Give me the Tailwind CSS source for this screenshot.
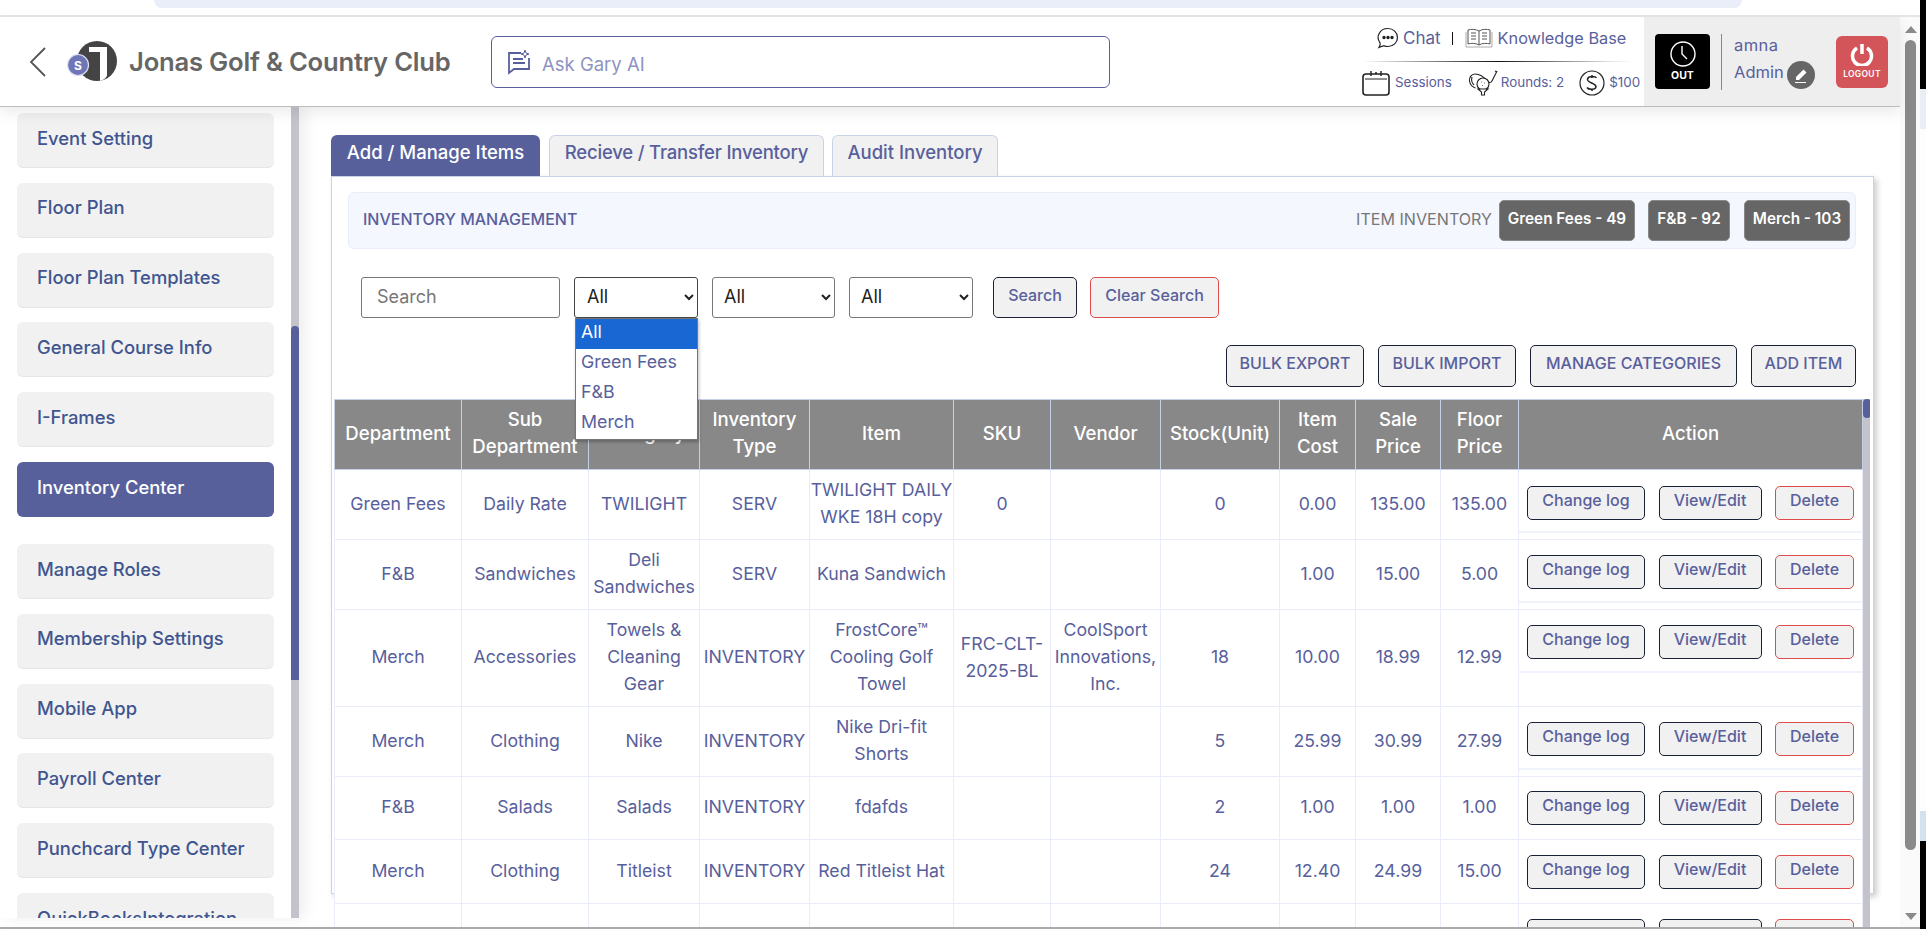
<!DOCTYPE html>
<html lang="en">
<head>
<meta charset="utf-8">
<title>Inventory Center</title>
<script src="https://cdn.jsdelivr.net/npm/@tailwindcss/browser@4"></script>
</head>
<body class="m-0 overflow-hidden bg-white">
<div class="flex h-[929px] w-[1926px] overflow-hidden font-['Inter',sans-serif] text-[#58609c]">
  <div class="flex w-[1920px] flex-col">
    <div class="flex h-[15px] shrink-0 bg-white pl-[154px]">
      <div class="h-[8px] w-[1588px] rounded-b-[12px] bg-[#e9eef8]"></div>
    </div>
    <div class="h-[2px] shrink-0 bg-[#e5e5e5]"></div>
    <div class="flex h-[910px] shrink-0">
      <div class="flex w-[1900px] flex-col">
        <header class="relative z-20 flex h-[90px] shrink-0 items-stretch border-b border-[#bcbcbc] bg-white shadow-[0_6px_14px_rgba(0,0,0,0.08)]">
          <svg class="ml-[29px] mt-[30px] h-[30px] w-[17px]" viewBox="0 0 17 30" fill="none" stroke="#555" stroke-width="1.8"><path d="M16 1 2 15l14 14"/></svg>
          <svg class="ml-[21px] mt-[23px] h-[42px] w-[50px]" viewBox="0 0 50 42">
            <circle cx="30" cy="21" r="20" fill="#444"/>
            <path d="M22 7h18v28c0 2-3 5-7 6V12H22z" fill="#fff"/>
            <circle cx="11" cy="25" r="10.5" fill="#6e76b8" stroke="#dfe1f2" stroke-width="1.2"/>
            <text x="11" y="29.5" text-anchor="middle" font-size="12" font-weight="700" fill="#fff" font-family="Inter">S</text>
          </svg>
          <div class="ml-[12px] mt-[29px] w-[321px] whitespace-nowrap text-[25.6px] font-semibold leading-[32px] tracking-[-0.2px] text-[#666]">Jonas Golf &amp; Country Club</div>
          <div class="ml-[41px] mt-[19px] flex h-[52px] w-[619px] items-center rounded-[6px] border border-[#58609c] pl-[15px]">
            <svg class="h-[26px] w-[24px]" viewBox="0 0 24 26" fill="none" stroke="#58609c" stroke-width="1.8"><path d="M14 4H2v20l5-4h15V9"/><path d="M6 10h10M6 14h12" /><path d="M18 1l1 3 3 1-3 1-1 3-1-3-3-1 3-1z" stroke-width="1"/></svg>
            <span class="ml-[11px] pt-[5px] text-[18.5px] text-[#8e93c0]">Ask Gary AI</span>
          </div>
          <div class="ml-[249px] flex w-[282px] flex-col pl-[3px]">
            <div class="flex h-[44px] items-center pb-[2px] pl-[15px]">
              <svg class="h-[22px] w-[22px]" viewBox="0 0 22 22" fill="none" stroke="#222" stroke-width="1.2"><path d="M11 1.5a9.5 9 0 0 1 0 18c-2 0-3-.2-4-.8l-5 1.6c1-1.500 1.500-3 1-4.500A9.500 9 0 0 1 11 1.500z"/><circle cx="7" cy="10.500" r="1.100" fill="#222"/><circle cx="11" cy="10.500" r="1.100" fill="#222"/><circle cx="15" cy="10.500" r="1.100" fill="#222"/></svg>
              <span class="ml-[4px] text-[17px] leading-[20px]">Chat</span>
              <span class="ml-[11px] h-[13px] w-px bg-[#111]"></span>
              <svg class="ml-[12px] h-[22px] w-[28px]" viewBox="0 0 28 22" fill="none" stroke="#555" stroke-width="1"><path d="M14 4C11 2 6 2 3 3v14c3-1 8-1 11 1 3-2 8-2 11-1V3c-3-1-8-1-11 1zM14 4v14"/><path d="M1 5v15h26V5" stroke="#aaa"/><path d="M6 6h5M6 9h5M6 12h5M17 6h5M17 9h5M17 12h5"/></svg>
              <span class="ml-[5px] whitespace-nowrap text-[16.3px] leading-[20px]">Knowledge Base</span>
            </div>
            <div class="h-px w-[272px] bg-[linear-gradient(90deg,#fff,#111_50%,#ddd_90%,#fff)]"></div>
            <div class="flex h-[44px] items-center pb-[3px] text-[13.4px]">
              <svg class="h-[26px] w-[28px]" viewBox="0 0 28 26" fill="none" stroke="#222" stroke-width="1.600"><rect x="1" y="4" width="26" height="21" rx="3"/><path d="M3 9h22" stroke-width="1"/><path d="M9 1v5M19 1v5M13 3h2" stroke-width="1.400"/></svg>
              <span class="ml-[5px] whitespace-nowrap">Sessions</span>
              <svg class="ml-[16px] h-[26px] w-[30px]" viewBox="0 0 30 26" fill="none" stroke="#222" stroke-width="1.100"><path d="M29 1 24 11c-1 2-3 2-5 0-3-4-7-7-12-7C3 4 1 8 1.500 11c.5 3 3 6 6 7"/><path d="M4 7c-1 3 0 6 2 8"/><path d="M27 1l2 1"/><circle cx="15" cy="14" r="6" fill="#fff"/><path d="M10 19h10l-3.500 3v3h-3v-3z" fill="#fff"/><path d="M13 12h.6M16 13h.6M14 15.500h.6"/></svg>
              <span class="ml-[3px] whitespace-nowrap">Rounds: 2</span>
              <svg class="ml-[15px] h-[26px] w-[26px]" viewBox="0 0 26 26" fill="none" stroke="#222" stroke-width="1.200"><circle cx="13" cy="13" r="12"/><path d="M17.500 8c-1-2-8-2.500-9 1-1 4 9 4 8.500 8-.5 3-7.500 3-9 .5M13 5v3M13 19v2" stroke-width="1.500"/></svg>
              <span class="ml-[4px] whitespace-nowrap">$100</span>
            </div>
          </div>
          <div class="ml-auto flex w-[256px] shrink-0 bg-[#eeeeee]">
            <div class="ml-[11px] mt-[17px] flex h-[55px] w-[55px] flex-col items-center rounded-[4px] bg-black pt-[7px]">
              <svg class="h-[26px] w-[26px]" viewBox="0 0 26 26" fill="none" stroke="#fff" stroke-width="1.400"><circle cx="13" cy="13" r="12"/><path d="M12 5v8l5 5"/></svg>
              <span class="mt-[2px] text-[10.5px] font-bold leading-[14px] text-white">OUT</span>
            </div>
            <div class="ml-[11px] mt-[17px] h-[56px] w-px bg-[#888]"></div>
            <div class="ml-[12px] flex w-[90px] flex-col pt-[15px] text-[16.5px] leading-[27px]">
              <span class="tracking-[0.4px]">amna</span>
              <div class="flex items-start">
                <span>Admin</span>
                <span class="ml-[3px] mt-[2px] flex h-[28px] w-[28px] items-center justify-center rounded-full bg-[#666]">
                  <svg class="h-[16px] w-[16px]" viewBox="0 0 16 16" fill="#fff"><path d="M3 10 10.500 2.500l3 3L6 13H3z"/><path d="M2 15h11v1H2z"/></svg>
                </span>
              </div>
            </div>
            <div class="ml-[12px] mt-[19px] flex h-[52px] w-[52px] flex-col items-center rounded-[6px] bg-[#d35459] pt-[6px]">
              <svg class="h-[24px] w-[24px]" viewBox="0 0 24 24" fill="none" stroke="#fff" stroke-width="3.500"><path d="M7 6a9.500 9.500 0 1 0 10 0"/><path d="M12 2v10"/></svg>
              <span class="mt-[2px] text-[8.5px] font-semibold leading-[12px] tracking-[0.3px] text-white">LOGOUT</span>
            </div>
          </div>
        </header>
        <div class="flex h-[820px] shrink-0">
          <aside class="relative z-10 flex h-[811px] w-[299px] shrink-0 overflow-hidden bg-white shadow-[6px_0_14px_rgba(0,0,0,0.07)]">
            <nav class="h-[811px] w-[291px] shrink-0 overflow-hidden pl-[17px] pr-[17px] pt-[6px] text-[18.4px] font-medium text-[#40558f]">
              <div class="mb-[14.8px] flex h-[55px] items-center rounded-[6px] border-b border-[#e6e6e6] bg-[#f1f1f1] pb-[3px] pl-[20px]">Event Setting</div>
              <div class="mb-[14.8px] flex h-[55px] items-center rounded-[6px] border-b border-[#e6e6e6] bg-[#f1f1f1] pb-[3px] pl-[20px]">Floor Plan</div>
              <div class="mb-[14.8px] flex h-[55px] items-center rounded-[6px] border-b border-[#e6e6e6] bg-[#f1f1f1] pb-[3px] pl-[20px]">Floor Plan Templates</div>
              <div class="mb-[14.8px] flex h-[55px] items-center rounded-[6px] border-b border-[#e6e6e6] bg-[#f1f1f1] pb-[3px] pl-[20px]">General Course Info</div>
              <div class="mb-[14.8px] flex h-[55px] items-center rounded-[6px] border-b border-[#e6e6e6] bg-[#f1f1f1] pb-[3px] pl-[20px]">I-Frames</div>
              <div class="mb-[27px] flex h-[55px] items-center rounded-[6px] bg-[#58609c] pb-[4px] pl-[20px] text-white">Inventory Center</div>
              <div class="mb-[14.8px] flex h-[55px] items-center rounded-[6px] border-b border-[#e6e6e6] bg-[#f1f1f1] pb-[3px] pl-[20px]">Manage Roles</div>
              <div class="mb-[14.8px] flex h-[55px] items-center rounded-[6px] border-b border-[#e6e6e6] bg-[#f1f1f1] pb-[3px] pl-[20px]">Membership Settings</div>
              <div class="mb-[14.8px] flex h-[55px] items-center rounded-[6px] border-b border-[#e6e6e6] bg-[#f1f1f1] pb-[3px] pl-[20px]">Mobile App</div>
              <div class="mb-[14.8px] flex h-[55px] items-center rounded-[6px] border-b border-[#e6e6e6] bg-[#f1f1f1] pb-[3px] pl-[20px]">Payroll Center</div>
              <div class="mb-[14.8px] flex h-[55px] items-center rounded-[6px] border-b border-[#e6e6e6] bg-[#f1f1f1] pb-[3px] pl-[20px]">Punchcard Type Center</div>
              <div class="mb-[14.8px] flex h-[55px] items-center rounded-[6px] border-b border-[#e6e6e6] bg-[#f1f1f1] pb-[3px] pl-[20px]">QuickBooksIntegration</div>
            </nav>
            <div class="h-full w-[8px] shrink-0 bg-[#c4c2ca] pt-[219px]">
              <div class="h-[354px] rounded-t-[4px] bg-[#58609c]"></div>
            </div>
          </aside>
          <main class="h-[820px] w-[1601px] shrink-0 overflow-hidden pl-[32px] pt-[28px]">
            <div class="flex h-[41px] items-end text-[18.5px] font-medium leading-[24px]">
              <div class="flex h-[41px] w-[209px] items-center justify-center rounded-t-[6px] bg-[#58609c] pb-[7px] text-white">Add / Manage Items</div>
              <div class="ml-[9px] flex h-[41px] w-[275px] items-center justify-center whitespace-nowrap rounded-t-[6px] border border-b-0 border-[#c9d3e8] bg-[#f1f1f1] pb-[9px] tracking-[-0.2px]">Recieve / Transfer Inventory</div>
              <div class="ml-[8px] flex h-[41px] w-[166px] items-center justify-center rounded-t-[6px] border border-b-0 border-[#c9d3e8] bg-[#f1f1f1] pb-[9px]">Audit Inventory</div>
            </div>
            <section class="h-[718px] w-[1543px] border border-[#c9d3e8] bg-white shadow-[3px_3px_6px_rgba(0,0,0,0.2)]">
              <div class="ml-[16px] mr-[17px] mt-[15px] flex h-[57px] items-center rounded-[6px] border border-[#e9eefa] bg-[#f4f7fe] pl-[14px] pr-[5px]">
                <span class="pb-[3px] text-[16px] font-medium">INVENTORY MANAGEMENT</span>
                <span class="ml-auto pb-[2px] text-[16.1px] text-[#777]">ITEM INVENTORY</span>
                <span class="ml-[7px] flex h-[41px] w-[136px] items-center justify-center rounded-[5px] border border-[#888] bg-[#666] pb-[3px] text-[15.3px] font-semibold text-white">Green Fees - 49</span>
                <span class="ml-[13px] flex h-[41px] w-[82px] items-center justify-center rounded-[5px] border border-[#888] bg-[#666] pb-[3px] text-[15.3px] font-semibold text-white">F&amp;B - 92</span>
                <span class="ml-[14px] flex h-[41px] w-[106px] items-center justify-center rounded-[5px] border border-[#888] bg-[#666] pb-[3px] text-[15.3px] font-semibold text-white">Merch - 103</span>
              </div>
              <div class="ml-[29px] mt-[28px] flex h-[41px] items-stretch">
                <input class="w-[199px] rounded-[3px] border border-[#767676] bg-white pb-[3px] pl-[15px] text-[18px] text-[#555] placeholder:text-[#777]" placeholder="Search">
                <div class="relative z-30 ml-[14px] w-[124px]">
                  <select class="h-full w-full rounded-[3px] border border-[#444] bg-white pb-[3px] pl-[8px] text-[18px] text-[#222]"><option>All</option></select>
                  <div class="absolute left-[1px] top-[41px] w-[123px] border border-[#767676] bg-white text-[17.8px] leading-[25px] shadow-[1px_2px_3px_rgba(0,0,0,0.25)]">
                    <div class="bg-[#1967d2] pb-[5px] pl-[5px] text-white">All</div>
                    <div class="pb-[5px] pl-[5px]">Green Fees</div>
                    <div class="pb-[5px] pl-[5px]">F&amp;B</div>
                    <div class="pb-[5px] pl-[5px]">Merch</div>
                  </div>
                </div>
                <select class="ml-[14px] w-[123px] rounded-[3px] border border-[#767676] bg-white pb-[3px] pl-[7px] text-[18px] text-[#222]"><option>All</option></select>
                <select class="ml-[14px] w-[124px] rounded-[3px] border border-[#767676] bg-white pb-[3px] pl-[7px] text-[18px] text-[#222]"><option>All</option></select>
                <button class="ml-[20px] w-[84px] rounded-[5px] border border-[#1a2035] bg-[#f1f1f1] pb-[6px] text-[16px] font-medium text-[#58609c]">Search</button>
                <button class="ml-[13px] w-[129px] rounded-[5px] border border-[#dd4b4b] bg-[#f1f1f1] pb-[6px] text-[16px] font-medium text-[#58609c]">Clear Search</button>
              </div>
              <div class="mr-[17px] mt-[27px] flex h-[42px] items-stretch justify-end gap-[14px] text-[16px] font-medium">
                <button class="w-[138px] rounded-[5px] border border-[#1a2035] bg-[#f1f1f1] pb-[6px] text-[#58609c]">BULK EXPORT</button>
                <button class="w-[138px] rounded-[5px] border border-[#1a2035] bg-[#f1f1f1] pb-[6px] text-[#58609c]">BULK IMPORT</button>
                <button class="w-[207px] rounded-[5px] border border-[#1a2035] bg-[#f1f1f1] pb-[6px] text-[#58609c]">MANAGE CATEGORIES</button>
                <button class="w-[105px] rounded-[5px] border border-[#1a2035] bg-[#f1f1f1] pb-[6px] text-[#58609c]">ADD ITEM</button>
              </div>
              <div class="ml-[2px] mt-[12px] flex h-[528px] w-[1536px] overflow-hidden bg-white">
                <table class="w-[1528px] shrink-0 table-fixed border-collapse text-center text-[17.7px] leading-[27px]">
                  <colgroup>
                    <col class="w-[127px]"><col class="w-[127px]"><col class="w-[111px]"><col class="w-[110px]"><col class="w-[144px]"><col class="w-[97px]"><col class="w-[110px]"><col class="w-[119px]"><col class="w-[76px]"><col class="w-[85px]"><col class="w-[78px]"><col class="w-[344px]">
                  </colgroup>
                  <thead>
                    <tr class="h-[70px] bg-[#888888] text-[18.6px] text-white [&_th]:border [&_th]:border-[#c3d0e6] [&_th]:p-0 [&_th]:pb-[3px] [&_th]:font-medium">
                      <th>Department</th>
                      <th>Sub Department</th>
                      <th>Category</th>
                      <th>Inventory Type</th>
                      <th>Item</th>
                      <th>SKU</th>
                      <th>Vendor</th>
                      <th>Stock(Unit)</th>
                      <th>Item Cost</th>
                      <th>Sale Price</th>
                      <th>Floor Price</th>
                      <th>Action</th>
                    </tr>
                  </thead>
                  <tbody class="[&_td]:border [&_td]:border-[#e9edfa] [&_td]:p-0 [&_td]:pb-[3px]">
                    <tr class="h-[70px]">
                      <td>Green Fees</td><td>Daily Rate</td><td>TWILIGHT</td><td>SERV</td><td>TWILIGHT DAILY WKE 18H copy</td><td>0</td><td></td><td>0</td><td>0.00</td><td>135.00</td><td>135.00</td>
                      <td class="pb-0! align-top"><div class="flex h-[63px] gap-[13.5px] border-b-2 border-[#f0f3fc] pl-[8px] pt-[16px] text-[16px] font-medium"><button class="h-[34px] w-[118px] rounded-[5px] border border-[#1a2035] bg-[#f1f1f1] pb-[5px] text-[#58609c]">Change log</button><button class="h-[34px] w-[103px] rounded-[5px] border border-[#1a2035] bg-[#f1f1f1] pb-[5px] text-[#58609c]">View/Edit</button><button class="h-[34px] w-[79px] rounded-[5px] border border-[#dd4b4b] bg-[#f1f1f1] pb-[5px] text-[#58609c]">Delete</button></div></td>
                    </tr>
                    <tr class="h-[70px]">
                      <td>F&amp;B</td><td>Sandwiches</td><td>Deli Sandwiches</td><td>SERV</td><td>Kuna Sandwich</td><td></td><td></td><td></td><td>1.00</td><td>15.00</td><td>5.00</td>
                      <td class="pb-0! align-top"><div class="flex h-[63px] gap-[13.5px] border-b-2 border-[#f0f3fc] pl-[8px] pt-[15px] text-[16px] font-medium"><button class="h-[34px] w-[118px] rounded-[5px] border border-[#1a2035] bg-[#f1f1f1] pb-[5px] text-[#58609c]">Change log</button><button class="h-[34px] w-[103px] rounded-[5px] border border-[#1a2035] bg-[#f1f1f1] pb-[5px] text-[#58609c]">View/Edit</button><button class="h-[34px] w-[79px] rounded-[5px] border border-[#dd4b4b] bg-[#f1f1f1] pb-[5px] text-[#58609c]">Delete</button></div></td>
                    </tr>
                    <tr class="h-[97px]">
                      <td>Merch</td><td>Accessories</td><td>Towels &amp; Cleaning Gear</td><td>INVENTORY</td><td>FrostCore™ Cooling Golf Towel</td><td>FRC-CLT-2025-BL</td><td>CoolSport Innovations, Inc.</td><td>18</td><td>10.00</td><td>18.99</td><td>12.99</td>
                      <td class="pb-0! align-top"><div class="flex h-[63px] gap-[13.5px] border-b-2 border-[#f0f3fc] pl-[8px] pt-[15px] text-[16px] font-medium"><button class="h-[34px] w-[118px] rounded-[5px] border border-[#1a2035] bg-[#f1f1f1] pb-[5px] text-[#58609c]">Change log</button><button class="h-[34px] w-[103px] rounded-[5px] border border-[#1a2035] bg-[#f1f1f1] pb-[5px] text-[#58609c]">View/Edit</button><button class="h-[34px] w-[79px] rounded-[5px] border border-[#dd4b4b] bg-[#f1f1f1] pb-[5px] text-[#58609c]">Delete</button></div></td>
                    </tr>
                    <tr class="h-[70px]">
                      <td>Merch</td><td>Clothing</td><td>Nike</td><td>INVENTORY</td><td>Nike Dri-fit Shorts</td><td></td><td></td><td>5</td><td>25.99</td><td>30.99</td><td>27.99</td>
                      <td class="pb-0! align-top"><div class="flex h-[63px] gap-[13.5px] border-b-2 border-[#f0f3fc] pl-[8px] pt-[15px] text-[16px] font-medium"><button class="h-[34px] w-[118px] rounded-[5px] border border-[#1a2035] bg-[#f1f1f1] pb-[5px] text-[#58609c]">Change log</button><button class="h-[34px] w-[103px] rounded-[5px] border border-[#1a2035] bg-[#f1f1f1] pb-[5px] text-[#58609c]">View/Edit</button><button class="h-[34px] w-[79px] rounded-[5px] border border-[#dd4b4b] bg-[#f1f1f1] pb-[5px] text-[#58609c]">Delete</button></div></td>
                    </tr>
                    <tr class="h-[63px]">
                      <td>F&amp;B</td><td>Salads</td><td>Salads</td><td>INVENTORY</td><td>fdafds</td><td></td><td></td><td>2</td><td>1.00</td><td>1.00</td><td>1.00</td>
                      <td class="pb-0! align-top"><div class="flex h-[62px] gap-[13.5px] pl-[8px] pt-[14px] text-[16px] font-medium"><button class="h-[34px] w-[118px] rounded-[5px] border border-[#1a2035] bg-[#f1f1f1] pb-[5px] text-[#58609c]">Change log</button><button class="h-[34px] w-[103px] rounded-[5px] border border-[#1a2035] bg-[#f1f1f1] pb-[5px] text-[#58609c]">View/Edit</button><button class="h-[34px] w-[79px] rounded-[5px] border border-[#dd4b4b] bg-[#f1f1f1] pb-[5px] text-[#58609c]">Delete</button></div></td>
                    </tr>
                    <tr class="h-[64px]">
                      <td>Merch</td><td>Clothing</td><td>Titleist</td><td>INVENTORY</td><td>Red Titleist Hat</td><td></td><td></td><td>24</td><td>12.40</td><td>24.99</td><td>15.00</td>
                      <td class="pb-0! align-top"><div class="flex h-[63px] gap-[13.5px] pl-[8px] pt-[15px] text-[16px] font-medium"><button class="h-[34px] w-[118px] rounded-[5px] border border-[#1a2035] bg-[#f1f1f1] pb-[5px] text-[#58609c]">Change log</button><button class="h-[34px] w-[103px] rounded-[5px] border border-[#1a2035] bg-[#f1f1f1] pb-[5px] text-[#58609c]">View/Edit</button><button class="h-[34px] w-[79px] rounded-[5px] border border-[#dd4b4b] bg-[#f1f1f1] pb-[5px] text-[#58609c]">Delete</button></div></td>
                    </tr>
                    <tr class="h-[64px]">
                      <td></td><td></td><td></td><td></td><td></td><td></td><td></td><td></td><td></td><td></td><td></td>
                      <td class="pb-0! align-top"><div class="flex h-[63px] gap-[13.5px] pl-[8px] pt-[15px] text-[16px] font-medium"><button class="h-[34px] w-[118px] rounded-[5px] border border-[#1a2035] bg-[#f1f1f1] pb-[5px] text-[#58609c]">Change log</button><button class="h-[34px] w-[103px] rounded-[5px] border border-[#1a2035] bg-[#f1f1f1] pb-[5px] text-[#58609c]">View/Edit</button><button class="h-[34px] w-[79px] rounded-[5px] border border-[#dd4b4b] bg-[#f1f1f1] pb-[5px] text-[#58609c]">Delete</button></div></td>
                    </tr>
                  </tbody>
                </table>
                <div class="h-full w-[8px] shrink-0 bg-[#c4c2ca]"><div class="h-[19px] rounded-[4px] bg-[#58609c]"></div></div>
              </div>
            </section>
          </main>
        </div>
      </div>
      <div class="flex h-[910px] w-[20px] shrink-0 flex-col items-center bg-[#fafafa] pl-[1px]">
        <div class="mt-[9px] h-0 w-0 border-x-[6px] border-b-[7px] border-x-transparent border-b-[#8a8a8a]"></div>
        <div class="mt-[7px] h-[810px] w-[11px] rounded-[6px] bg-[#8a8a8a]"></div>
        <div class="mt-[63px] h-0 w-0 border-x-[6px] border-t-[7px] border-x-transparent border-t-[#8a8a8a]"></div>
      </div>
    </div>
    <div class="h-[2px] shrink-0 bg-[#aaaaaa]"></div>
  </div>
  <div class="flex w-[6px] flex-col">
    <div class="h-[89px] bg-black"></div>
    <div class="h-[40px] bg-[#e9eef5]"></div>
    <div class="h-[682px] bg-[#fdfdfd]"></div>
    <div class="h-[30px] bg-[#d3e2ef]"></div>
    <div class="flex-1 bg-black"></div>
  </div>
</div>
</body>
</html>
